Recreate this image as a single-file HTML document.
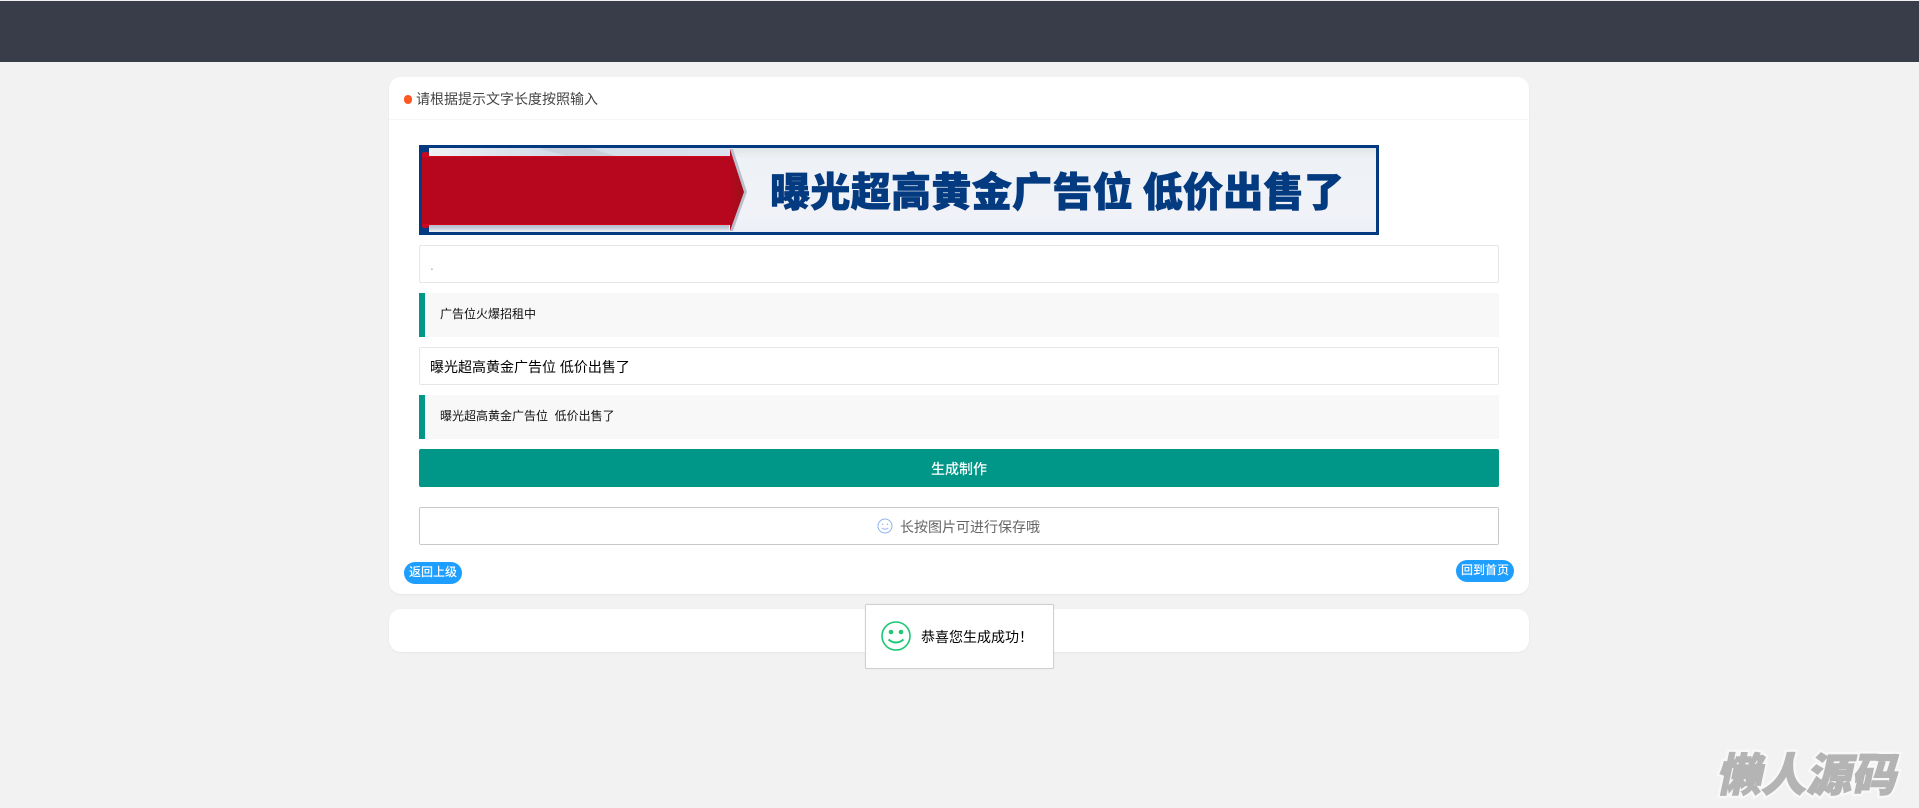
<!DOCTYPE html>
<html lang="zh-CN">
<head>
<meta charset="utf-8">
<title>生成制作</title>
<style>
*{box-sizing:border-box}
html,body{margin:0;padding:0}
body{width:1919px;height:808px;overflow:hidden;position:relative;background:#f2f2f2;font-family:"Liberation Sans","Noto Sans CJK SC",sans-serif;font-size:14px;color:#333}
.abs{position:absolute}
.top{left:0;top:1px;width:1919px;height:61px;background:#393d49}
.card{left:389px;width:1140px;background:#fff;border-radius:12px;box-shadow:0 1px 2px rgba(0,0,0,.05)}
.line{left:389px;top:119px;width:1140px;height:1px;background:#f6f6f6}
.dot{left:403.5px;top:95px;width:8.5px;height:8.5px;border-radius:50%;background:#ff5722}
.t{white-space:pre;line-height:20px}
.inp{left:419px;width:1080px;height:38px;background:#fff;border:1px solid #e6e6e6;border-radius:2px;padding:2px 0 0 10px;margin:0;font:14px "Liberation Sans","Noto Sans CJK SC",sans-serif;color:#000;outline:none;display:block}
.q{left:419px;width:1080px;height:44px;background:#f8f8f8;border-left:6px solid #009688;padding-left:15px;font-size:12px;line-height:42px;color:#111;white-space:pre}
.btn{left:419px;top:449px;width:1080px;height:38px;line-height:40px;background:#009688;color:#fff;text-align:center;border-radius:2px;font-size:14px;font-weight:500}
.tip{left:419px;top:507px;width:1080px;height:38px;border:1px solid #c9c9c9;border-radius:2px;background:#fff}
.pill{width:58px;height:22px;line-height:21px;border-radius:11px;background:#1e9fff;color:#fff;font-size:12px;text-align:center;font-weight:500}
.toast{left:865px;top:604px;width:189px;height:65px;background:#fff;border:1px solid #d0d0d0;border-radius:2px;box-shadow:0 0 1px rgba(0,0,0,.12)}
.mark{left:1720px;top:744px;width:190px;height:56px;font:900 45px/56px "Noto Sans CJK SC",sans-serif;transform:skewX(-12deg);white-space:nowrap}
.mark.back{color:#f8f8f8;-webkit-text-stroke:6px #f8f8f8}
.mark.front{color:#b4b4b4;-webkit-text-stroke:1.2px #b4b4b4}
</style>
</head>
<body>
<div class="abs top"></div>

<div class="abs card" style="top:77px;height:517px"></div>
<div class="abs line"></div>
<div class="abs dot"></div>
<div class="abs t" style="left:416px;top:89px;color:#444">请根据提示文字长度按照输入</div>

<svg class="abs" style="left:419px;top:145px" width="960" height="90" viewBox="0 0 960 90">
  <defs>
    <linearGradient id="bg" x1="0" y1="0" x2="0" y2="1">
      <stop offset="0" stop-color="#dfe5e6"/>
      <stop offset=".12" stop-color="#eef1f5"/>
      <stop offset=".8" stop-color="#f0f2f8"/>
      <stop offset="1" stop-color="#eceff6"/>
    </linearGradient>
    <linearGradient id="up" x1="0" y1="0" x2="1" y2="0">
      <stop offset="0" stop-color="#eef0f3"/>
      <stop offset=".4" stop-color="#d3dce8"/>
      <stop offset="1" stop-color="#dbe3ee"/>
    </linearGradient>
    <linearGradient id="low" x1="0" y1="0" x2="0" y2="1">
      <stop offset="0" stop-color="#aeb6c6"/>
      <stop offset=".5" stop-color="#c6ccd8"/>
      <stop offset="1" stop-color="#f0f2f7"/>
    </linearGradient>
    <linearGradient id="head" x1="0" y1="0" x2="1" y2="0">
      <stop offset="0" stop-color="#b7071e"/>
      <stop offset="1" stop-color="#9c0f18"/>
    </linearGradient>
  </defs>
  <rect width="960" height="90" fill="#033a80"/>
  <rect x="3" y="3" width="954" height="84" fill="url(#bg)"/>
  <rect x="0" y="3" width="10" height="84" fill="#033a80"/>
  <rect x="10" y="3" width="302" height="9" fill="url(#up)"/>
  <polygon points="120,3 170,3 200,12 150,12" fill="#c9cfdb"/>
  <rect x="10" y="79" width="300" height="8" fill="url(#low)"/>
  <polygon points="311,4 325,47 311,86 314,86 328,47 314,4" fill="#b9bfcc"/>
  <rect x="3" y="7" width="7" height="76" rx="2" fill="#c20a22"/>
  <rect x="3" y="11" width="309" height="69" fill="#d5031c"/>
  <rect x="3" y="12" width="309" height="67" fill="#b7071e"/>
  <polygon points="311,4 325,47 311,86" fill="url(#head)"/>
  <text x="351" y="61" font-family="'Noto Sans CJK SC',sans-serif" font-weight="900" font-size="40" fill="#033a80" stroke="#033a80" stroke-width=".8" textLength="574" lengthAdjust="spacing" xml:space="preserve">曝光超高黄金广告位 低价出售了</text>
</svg>

<input class="abs inp" style="top:245px;color:#aaa" value=".">
<div class="abs q" style="top:293px">广告位火爆招租中</div>
<input class="abs inp" style="top:347px" value="曝光超高黄金广告位 低价出售了">
<div class="abs q" style="top:395px">曝光超高黄金广告位  低价出售了</div>
<div class="abs btn">生成制作</div>

<div class="abs tip"></div>
<svg class="abs" style="left:877px;top:518px" width="16" height="16" viewBox="0 0 16 16" fill="none" stroke="#8fb2ee" stroke-width="1">
  <circle cx="8" cy="8" r="7"/>
  <circle cx="5.6" cy="6.2" r=".7" fill="#8fb2ee" stroke="none"/>
  <circle cx="10.4" cy="6.2" r=".7" fill="#8fb2ee" stroke="none"/>
  <path d="M4.8 10q3.2 2.4 6.4 0"/>
</svg>
<div class="abs t" style="left:900px;top:517px;color:#666">长按图片可进行保存哦</div>

<div class="abs pill" style="left:404px;top:562px">返回上级</div>
<div class="abs pill" style="left:1456px;top:560px">回到首页</div>

<div class="abs card" style="top:609px;height:43px"></div>

<div class="abs toast"></div>
<svg class="abs" style="left:881px;top:621px" width="30" height="30" viewBox="0 0 30 30" fill="none" stroke="#1cc873" stroke-width="1.6">
  <circle cx="15" cy="15" r="14"/>
  <circle cx="10" cy="11" r="2.3" fill="#1cc873" stroke="none"/>
  <circle cx="20" cy="11" r="2.3" fill="#1cc873" stroke="none"/>
  <path d="M7.5 18.5q7.5 6 15 0" stroke-width="2"/>
</svg>
<div class="abs t" style="left:921px;top:627px;color:#000">恭喜您生成成功！</div>

<div class="abs mark back">懒人源码</div>
<div class="abs mark front">懒人源码</div>
</body>
</html>
